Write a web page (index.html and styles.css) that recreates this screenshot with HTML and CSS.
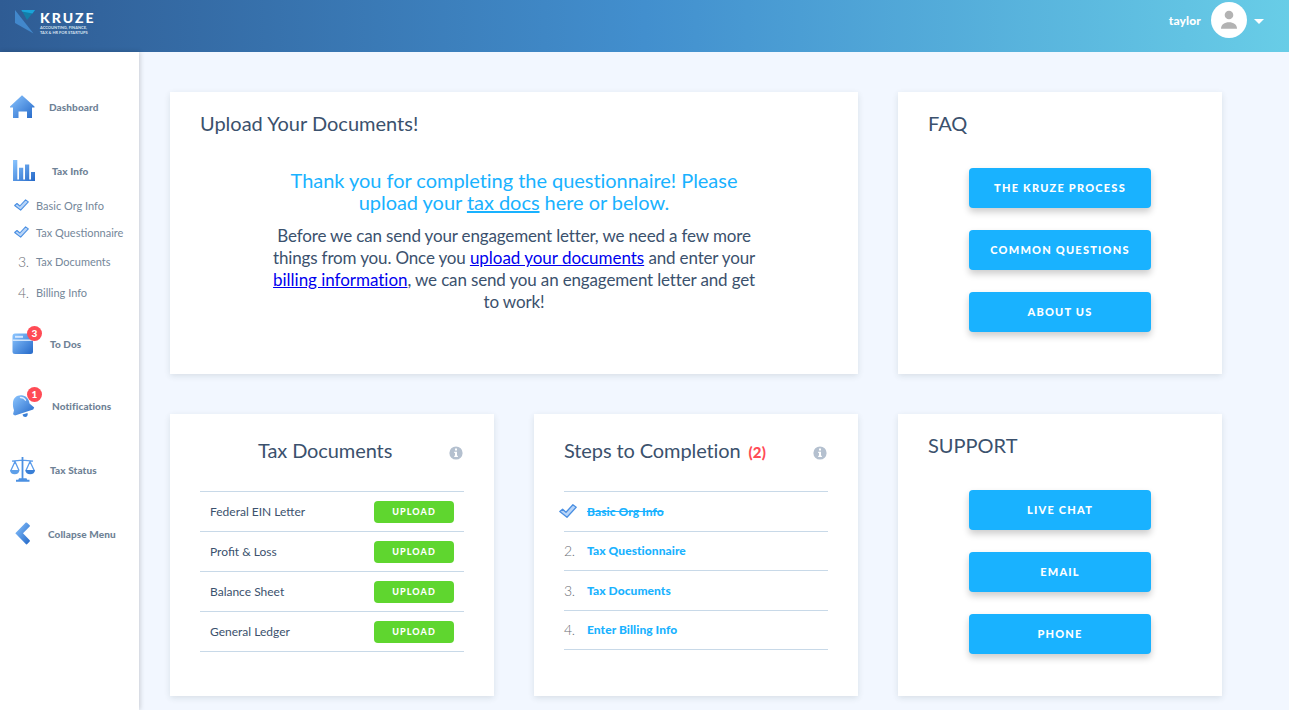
FILE: index.html
```
<!DOCTYPE html>
<html lang="en">
<head>
<meta charset="utf-8">
<title>Kruze Dashboard</title>
<link rel="stylesheet" href="styles.css">
</head>
<body>
<svg class="defs" width="0" height="0" aria-hidden="true">
  <defs>
    <linearGradient id="blue" x1="0" y1="0" x2="1" y2="1">
      <stop offset="0" stop-color="#8cc6ff"/>
      <stop offset="1" stop-color="#2468c8"/>
    </linearGradient>
    <symbol id="check" viewBox="0 0 18 14">
      <path d="M.8 7.600 3.600 5.200 7 8.200 13.900 .8 17.200 3.200 8 13.200Z" fill="#b9d5f8" stroke="#4a8fe2" stroke-width="1.300" stroke-linejoin="round"/>
    </symbol>
    <symbol id="info" viewBox="0 0 14 14">
      <circle cx="7" cy="7" r="6.600" fill="#b4c0cf"/>
      <path d="M6 2.600h2v2H6zM5.200 5.700H8v4h.9v1.300H5.200V9.700H6V7h-.8z" fill="#fff"/>
    </symbol>
  </defs>
</svg>
<header class="topbar">
  <div class="logo">
    <svg width="20" height="24" viewBox="0 0 20 24"><path d="M0 0 18.500 23.500 0 13Z" fill="#4288cc"/><path d="M6.500 0H20L12 10Z" fill="#137fa9"/><path d="M6.500 0H20L17.500 3.500 7 1.500Z" fill="#1ba3d8"/></svg>
    <div class="wordmark">
      <div class="brand">KRUZE</div>
      <div class="tagline"><div>ACCOUNTING, FINANCE,</div><div>TAX &amp; HR FOR STARTUPS</div></div>
    </div>
  </div>
  <div class="user">
    <span class="username">taylor</span>
    <svg class="avatar" width="36" height="36" viewBox="0 0 36 36"><circle cx="18" cy="18" r="18" fill="#fff"/><circle cx="18" cy="13" r="4.300" fill="#b3b3b3"/><path d="M10 26.700c0-4.200 3.500-6.400 8-6.400s8 2.200 8 6.400z" fill="#b3b3b3"/></svg>
    <span class="caret"></span>
  </div>
</header>
<div class="shell">
  <nav class="sidebar">
    <a class="item dashboard">
      <svg width="26" height="26" viewBox="0 0 26 26"><path d="M12 1.300 24.500 12.500v1H22V24h-5v-6.500H8.500V24H3V13.500H0v-1Z" fill="url(#blue)"/></svg>
      <span>Dashboard</span>
    </a>
    <a class="item taxinfo">
      <svg width="26" height="26" viewBox="0 0 26 26"><path d="M3 2h4.300v19.500H9V9.800h4.200v11.700H15V6.500h4.200v15H21V14h4v9H3Z" fill="url(#blue)"/></svg>
      <span>Tax Info</span>
    </a>
    <ol class="substeps">
      <li><svg class="tick" width="15" height="12"><use href="#check"/></svg>Basic Org Info</li>
      <li><svg class="tick" width="15" height="12"><use href="#check"/></svg>Tax Questionnaire</li>
      <li><span class="num">3.</span>Tax Documents</li>
      <li><span class="num">4.</span>Billing Info</li>
    </ol>
    <a class="item todos">
      <span class="icon"><svg width="26" height="26" viewBox="0 0 26 26"><rect x="2.500" y="2.500" width="20.500" height="20.500" rx="2.500" fill="url(#blue)"/><path d="M2.500 8.500H23v1.400H2.500z" fill="#dcecff"/><path d="M5 4.800h8v2H5z" fill="#d4e7ff"/></svg><b class="badge">3</b></span>
      <span>To Dos</span>
    </a>
    <a class="item notifications">
      <span class="icon"><svg width="26" height="26" viewBox="0 0 26 26"><path d="M3 9.500C3.300 4 8 1.200 13 2.400c4 1 6 4 6.500 8l4.700 4-1 2L5 22.500l-2-1.200 1-4C3 14.500 2.800 12.500 3 9.500Z" fill="url(#blue)"/><path d="M12.500 21.500 17.500 20c.8 2-.5 4-2.200 4-1.400 0-2.400-.8-2.800-2.500Z" fill="#397fd6"/><path d="M10.500 4.500c2-.1 3.800.8 5 2.700" fill="none" stroke="#e3f0ff" stroke-width="1.400" stroke-linecap="round"/></svg><b class="badge">1</b></span>
      <span>Notifications</span>
    </a>
    <a class="item status">
      <svg width="26" height="26" viewBox="0 0 26 26"><g fill="none" stroke="#5b9ceb" stroke-width="1.300"><path d="M2 4.200 10 3.400h5l8 .8M5 4.500.9 13.500M5 4.500l4 9M20 4.500l-4 9M20 4.500l4.200 9"/></g><path d="M11.600 0h1.800v21.200h3.100l.7 1.600h2.300v2H6v-2h2.300l.7-1.600h2.600z" fill="#4b90e2"/><path d="M0 13h9.400c0 2.700-2 4.300-4.700 4.300S0 15.700 0 13Z" fill="#5d9fe9"/><path d="M15.300 13H25c0 2.700-2.100 4.300-4.800 4.300S15.300 15.700 15.300 13Z" fill="#397fd6"/></svg>
      <span>Tax Status</span>
    </a>
    <a class="item collapse">
      <svg width="26" height="26" viewBox="0 0 26 26"><path d="M5.300 12.300 15.800 1.600Q16.400 1.200 17 1.700L19.700 4.300Q20.200 5 19.700 5.500L13 12.300 19.700 19.200Q20.200 19.800 19.700 20.400L17 23.200Q16.400 23.600 15.800 23.100Z" fill="url(#blue)"/></svg>
      <span>Collapse Menu</span>
    </a>
  </nav>
  <main class="content">
    <section class="card wide">
      <h2>Upload Your Documents!</h2>
      <div class="message">
        <p class="thanks">Thank you for completing the questionnaire! Please upload your <a href="#">tax docs</a> here or below.</p>
        <p class="before">Before we can send your engagement letter, we need a few more things from you. Once you <a href="#">upload your documents</a> and enter your <a href="#">billing information</a>, we can send you an engagement letter and get to work!</p>
      </div>
    </section>
    <section class="card">
      <h2>FAQ</h2>
      <div class="buttons"><button>THE KRUZE PROCESS</button><button>COMMON QUESTIONS</button><button>ABOUT US</button></div>
    </section>
    <section class="card listcard">
      <div class="cardhead centered"><h2>Tax Documents</h2><svg width="14" height="14"><use href="#info"/></svg></div>
      <ul class="docs">
        <li>Federal EIN Letter<button>UPLOAD</button></li>
        <li>Profit &amp; Loss<button>UPLOAD</button></li>
        <li>Balance Sheet<button>UPLOAD</button></li>
        <li>General Ledger<button>UPLOAD</button></li>
      </ul>
    </section>
    <section class="card listcard">
      <div class="cardhead"><h2>Steps to Completion</h2><b class="count">(2)</b><svg width="14" height="14"><use href="#info"/></svg></div>
      <ol class="steps">
        <li class="done"><svg class="tick" width="18" height="14"><use href="#check"/></svg><a>Basic Org Info</a></li>
        <li><span class="num">2.</span><a>Tax Questionnaire</a></li>
        <li><span class="num">3.</span><a>Tax Documents</a></li>
        <li><span class="num">4.</span><a>Enter Billing Info</a></li>
      </ol>
    </section>
    <section class="card">
      <h2>SUPPORT</h2>
      <div class="buttons"><button>LIVE CHAT</button><button>EMAIL</button><button>PHONE</button></div>
    </section>
  </main>
</div>
</body>
</html>
```
FILE: styles.css
```
* { box-sizing: border-box; }
body { margin: 0; height: 710px; overflow: hidden; background: #f2f7ff; color: #3b516d; font-family: Lato, sans-serif; }
h2, p, ul, ol { margin: 0; padding: 0; }
ul, ol { list-style: none; }
button { border: 0; padding: 0; color: #fff; font-family: inherit; font-weight: 900; }
.defs { display: block; height: 0; }

.topbar { display: flex; justify-content: space-between; height: 52px; background: linear-gradient(90deg, #2f5c94 0%, #428fce 50%, #68cde7 100%); }
.logo { display: flex; padding: 10px 0 0 15px; }
.wordmark { padding: 1px 0 0 5px; color: #fff; }
.brand { font-size: 14px; line-height: 14px; font-weight: 900; letter-spacing: 1.95px; }
.tagline { width: 60px; font-size: 4px; line-height: 5px; font-weight: 700; white-space: nowrap; color: #d5e1ef; }
.user { display: flex; align-items: center; height: 40px; padding-right: 25px; color: #fff; }
.username { font-size: 12px; font-weight: 900; letter-spacing: .15px; }
.avatar { margin: 0 7px 0 10px; }
.caret { margin-top: 2px; border: 5px solid transparent; border-top-color: #fff; border-bottom: 0; }

.shell { display: flex; height: 658px; }
.sidebar { width: 139px; padding: 39px 0 0 10px; background: #fff; box-shadow: 1px 0 5px rgba(0, 0, 0, .18); }
.item { display: flex; align-items: center; height: 32px; margin-bottom: 32px; color: #6f8296; font-size: 10px; font-weight: 900; letter-spacing: .1px; }
.item svg { display: block; flex: none; }
.icon { position: relative; }
.badge { position: absolute; left: 17px; top: -5px; width: 15px; height: 15px; border-radius: 50%; background: #ff4b55; color: #fff; font-size: 10px; line-height: 15px; text-align: center; }
.dashboard { gap: 13px; }
.taxinfo { gap: 16px; margin-bottom: 8px; }
.todos { gap: 14px; margin-bottom: 30px; }
.notifications { gap: 16px; }
.notifications .badge { top: -6px; }
.status { gap: 14px; }
.collapse { gap: 12px; }
.substeps { margin-bottom: 26px; color: #75879a; font-size: 11px; }
.substeps li { display: flex; align-items: center; height: 20px; margin-bottom: 7px; padding-left: 4px; }
.substeps li:nth-child(2) { margin-bottom: 9px; }
.substeps li:nth-child(3) { margin-bottom: 11px; }
.substeps .tick { margin-right: 7px; }
.substeps .num { width: 18px; margin-left: 4px; font-size: 14px; letter-spacing: -.4px; }
.num { color: #6b7076; font-weight: 300; }

.content { display: grid; grid-template-columns: repeat(3, 324px); grid-template-rows: 282px 282px; gap: 40px; padding: 40px 0 0 31px; }
.card { padding: 19px 30px; background: #fff; box-shadow: 0 2px 6px rgba(30, 60, 60, .12); }
.wide { grid-column: span 2; }
h2 { font-size: 20px; line-height: 24px; font-weight: 400; white-space: nowrap; }
.message { width: 488px; margin: 34px auto 0; text-align: center; line-height: 22px; }
.thanks { margin-bottom: 12px; color: #19b2ff; font-size: 20px; letter-spacing: -.04px; }
.thanks a { color: inherit; }
.before { font-size: 17px; letter-spacing: -.15px; }
.before a { color: #00e; letter-spacing: -.03px; }
.buttons { display: flex; flex-direction: column; align-items: center; gap: 22px; margin-top: 33px; }
.buttons button { width: 182px; height: 40px; padding-bottom: 2px; border-radius: 4px; background: #19b2ff; box-shadow: 0 4px 7px rgba(0, 0, 0, .2); font-size: 11px; letter-spacing: 1.22px; }

.listcard { padding-top: 24px; }
.cardhead { display: flex; align-items: center; height: 24px; margin-bottom: 29px; padding-right: 1.5px; }
.cardhead h2 { letter-spacing: -.1px; }
.cardhead svg { margin: 6px 0 0 auto; }
.centered h2 { margin-left: 58px; }
.count { margin: 4px 0 0 8px; color: #ff4b55; font-size: 15px; font-weight: 900; letter-spacing: .1px; }
.docs, .steps { border-top: 1px solid #c8d9e8; }
.docs li { display: flex; align-items: center; justify-content: space-between; height: 40px; padding: 0 10px; border-bottom: 1px solid #c8d9e8; font-size: 12px; }
.docs button { width: 80px; height: 22px; border-radius: 4px; background: #5fd62f; font-size: 9px; letter-spacing: 1.1px; }
.steps li { display: flex; align-items: center; height: 39.500px; border-bottom: 1px solid #c8d9e8; }
.steps a { color: #19b2ff; font-size: 12px; font-weight: 900; letter-spacing: .06px; }
.steps .num { width: 23px; font-size: 14px; letter-spacing: -.3px; }
.steps .tick { margin: 0 10px 0 -5px; }
.steps .done a { text-decoration: line-through; }
```
